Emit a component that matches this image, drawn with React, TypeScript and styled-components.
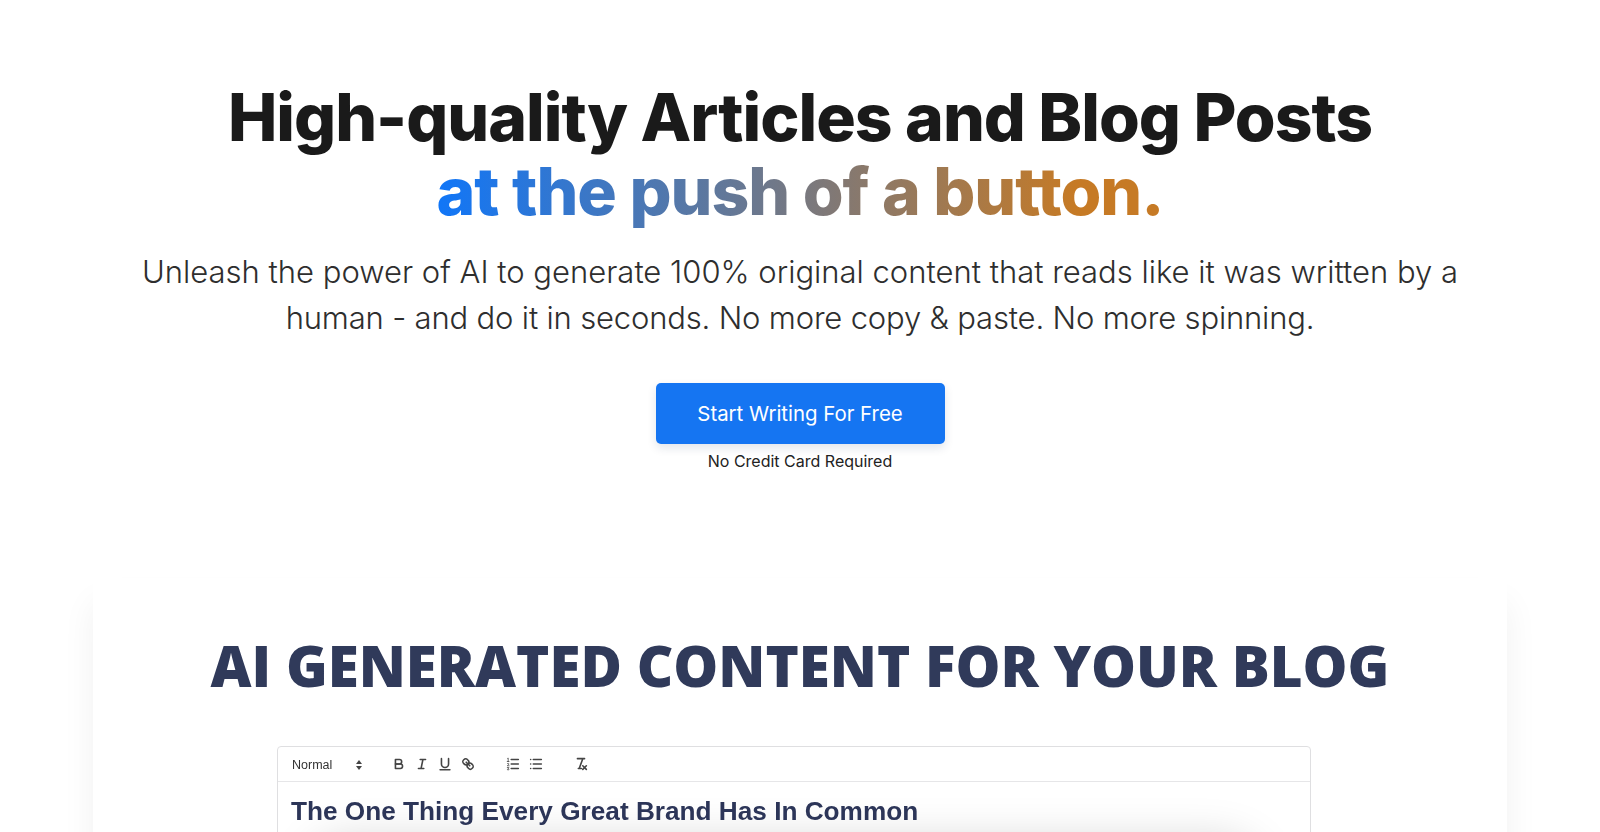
import React from 'react';
import styled, { createGlobalStyle } from 'styled-components';

const GlobalStyle = createGlobalStyle`
  html,
  body {
    margin: 0;
    height: 100%;
    overflow: hidden;
    background: #fff;
  }

  body {
    font-family: Inter, 'Liberation Sans', sans-serif;
  }
`;

const Page = styled.main`
  display: flex;
  flex-direction: column;
  align-items: center;
  height: 832px;
  overflow: hidden;
`;

const Hero = styled.section`
  display: flex;
  flex-direction: column;
  align-items: center;
  padding-top: 80px;
  width: 1400px;
  text-align: center;
`;

const Heading = styled.h1`
  margin: 0;
  font-size: 66px;
  line-height: 74px;
  font-weight: 800;
  letter-spacing: -1px;
  color: #1a1a1a;
`;

const GradientLine = styled.span`
  display: inline-block;
  background: linear-gradient(90deg, #1076f8 0%, #c67a25 88%, #c67a25 100%);
  -webkit-background-clip: text;
  background-clip: text;
  color: transparent;
`;

const Lead = styled.p`
  margin: 21px 0 0;
  font-size: 31px;
  line-height: 46px;
  font-weight: 300;
  color: #2e2e2e;
`;

const LeadTail = styled.span`
  letter-spacing: -0.17px;
`;

const CtaButton = styled.button`
  margin-top: 42px;
  width: 289px;
  height: 61px;
  border: 0;
  border-radius: 5px;
  background: #1575f2;
  box-shadow: 0 4px 10px rgba(20, 40, 80, 0.12);
  color: #fff;
  font-family: inherit;
  font-size: 20.4px;
  font-weight: 400;
`;

const CtaNote = styled.div`
  margin-top: 6px;
  font-size: 16px;
  line-height: 22px;
  color: #222;
`;

const Card = styled.section`
  flex: none;
  box-sizing: border-box;
  margin-top: 106px;
  width: 1414px;
  height: 400px;
  padding-top: 53px;
  border-radius: 8px;
  background: #fff;
  box-shadow: 0 24px 34px rgba(0, 0, 0, 0.06);
  display: flex;
  flex-direction: column;
  align-items: center;
`;

const CardTitle = styled.h2`
  margin: 0;
  font-family: 'Open Sans', sans-serif;
  font-size: 56.5px;
  line-height: 70px;
  font-weight: 800;
  color: #303a5a;
  filter: blur(0.4px);
`;

const Editor = styled.div`
  box-sizing: border-box;
  margin: 45px 12px 0 0;
  width: 1034px;
  height: 200px;
  border: 1.5px solid #dfdfe1;
  border-radius: 4px;
  filter: blur(0.3px);
`;

const Toolbar = styled.div`
  display: flex;
  align-items: center;
  height: 34px;
  padding-left: 14px;
  border-bottom: 1.5px solid #e6e6e8;
`;

const StyleSelect = styled.div`
  display: flex;
  align-items: center;
  justify-content: space-between;
  width: 71px;
  margin-right: 24px;
  padding-top: 1px;
  font-family: 'Liberation Sans', sans-serif;
  font-size: 12.5px;
  color: #333;
`;

const ToolGroup = styled.div`
  display: flex;
  margin-right: 22px;
`;

const ToolIcon = styled.svg`
  display: block;
  width: 16px;
  height: 16px;
  margin: 0 3.5px;
  fill: none;
  stroke: #444;
  stroke-width: 1.8;
  stroke-linecap: round;
  stroke-linejoin: round;
`;

const SortArrows = styled.svg`
  display: block;
  width: 8px;
  height: 12px;
  fill: #444;
`;

const EditorBody = styled.div`
  position: relative;
  padding: 13px 13px 0;
`;

const DocTitle = styled.h3`
  position: relative;
  z-index: 1;
  margin: 0;
  font-family: 'Liberation Sans', sans-serif;
  font-size: 26.2px;
  line-height: 32px;
  font-weight: 700;
  color: #2c3558;
`;

const FloatingShadow = styled.div`
  position: absolute;
  left: 30px;
  right: 50px;
  top: 62px;
  height: 80px;
  border-radius: 40px;
  background: #fff;
  box-shadow: 0 -4px 44px rgba(0, 0, 0, 0.17);
`;

export default function App() {
  return (
    <Page>
      <GlobalStyle />
      <Hero>
        <Heading>
          High-quality Articles and Blog Posts
          <br />
          <GradientLine>at the push of a button.</GradientLine>
        </Heading>
        <Lead>
          Unleash the power of AI to generate 100% original content that reads like it was written by a
          <br />
          <LeadTail>human - and do it in seconds. No more copy &amp; paste. No more spinning.</LeadTail>
        </Lead>
        <CtaButton>Start Writing For Free</CtaButton>
        <CtaNote>No Credit Card Required</CtaNote>
      </Hero>
      <Card>
        <CardTitle>AI GENERATED CONTENT FOR YOUR BLOG</CardTitle>
        <Editor>
          <Toolbar>
            <StyleSelect>
              Normal
              <SortArrows viewBox="0 0 8 12">
                <path d="M4 1 7 5H1zM4 11 1 7h6z" />
              </SortArrows>
            </StyleSelect>
            <ToolGroup>
              <ToolIcon viewBox="0 0 18 18">
                <path d="M5 4h4.5a2.5 2.5 0 0 1 0 5H5z" />
                <path d="M5 9h5.5a2.5 2.5 0 0 1 0 5H5z" />
              </ToolIcon>
              <ToolIcon viewBox="0 0 18 18">
                <path d="M7 4h6M5 14h6M8 14l2-10" />
              </ToolIcon>
              <ToolIcon viewBox="0 0 18 18">
                <path d="M5 3v6a4 4 0 0 0 4 4 4 4 0 0 0 4-4V3" />
                <path d="M3.5 15.5h11" />
              </ToolIcon>
              <ToolIcon viewBox="0 0 18 18">
                <path d="M7 7l4 4" />
                <path d="M8.9 4.577a3.476 3.476 0 0 1 .36 4.679 3.476 3.476 0 0 1-4.683-.356C3.185 7.5 2.035 6.4 4.217 4.217S7.5 3.185 8.9 4.577z" />
                <path d="M13.423 9.1a3.476 3.476 0 0 0-4.679-.36 3.476 3.476 0 0 0 .36 4.679c1.392 1.392 2.5 2.542 4.679.36S14.815 10.5 13.423 9.1z" />
              </ToolIcon>
            </ToolGroup>
            <ToolGroup>
              <ToolIcon viewBox="0 0 18 18">
                <path d="M7 4h8M7 9h8M7 14h8" />
                <path d="M3 2.6 3.6 2.3V6M2.5 6.2h2M2.6 8.6c1-.8 2-.2 1.7.7L2.6 11h2M2.6 13h1.8l-1 1.2c1 0 1.4.4 1.1 1-.3.5-1.2.5-1.9.2" strokeWidth="0.9" />
              </ToolIcon>
              <ToolIcon viewBox="0 0 18 18">
                <path d="M6 4h9M6 9h9M6 14h9M3 4h.01M3 9h.01M3 14h.01" />
              </ToolIcon>
            </ToolGroup>
            <ToolGroup>
              <ToolIcon viewBox="0 0 18 18">
                <path d="M5 3h8M6 14h3.4M11 3 7 14M11 11l4 4M15 11l-4 4" />
              </ToolIcon>
            </ToolGroup>
          </Toolbar>
          <EditorBody>
            <DocTitle>The One Thing Every Great Brand Has In Common</DocTitle>
            <FloatingShadow />
          </EditorBody>
        </Editor>
      </Card>
    </Page>
  );
}
